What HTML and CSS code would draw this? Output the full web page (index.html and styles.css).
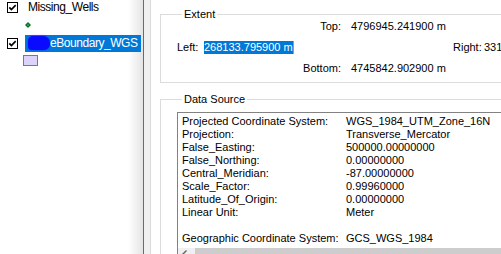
FILE: index.html
```html
<!DOCTYPE html>
<html lang="en">
<head>
    <meta charset="UTF-8">
    <title>Layer Properties</title>
    <link rel="stylesheet" href="styles.css">
</head>
<body>
<div class="window">
    <div class="toc">
        <div class="layer first">
            <svg class="check" width="11" height="11" viewBox="0 0 11 11"><rect x="0.5" y="0.5" width="10" height="10" fill="#fff" stroke="#000"/><path d="M2.3 5.4 L4.4 7.6 L8.7 3.2" fill="none" stroke="#000" stroke-width="1.7"/></svg>
            <span class="name">Missing_Wells</span>
        </div>
        <div class="symbol"><span class="point"></span></div>
        <div class="layer">
            <svg class="check" width="11" height="11" viewBox="0 0 11 11"><rect x="0.5" y="0.5" width="10" height="10" fill="#fff" stroke="#000"/><path d="M2.3 5.4 L4.4 7.6 L8.7 3.2" fill="none" stroke="#000" stroke-width="1.7"/></svg>
            <span class="name selected"><span class="redact"></span>eBoundary_WGS</span>
        </div>
        <div class="symbol poly-row"><span class="poly"></span></div>
    </div>
    <div class="splitter"></div>
    <div class="props">
        <fieldset class="group extent">
            <legend>Extent</legend>
            <div class="extent-grid">
                <span class="lbl c3">Top:</span>
                <span class="val c4">4796945.241900 m</span>

                <span class="c1">Left:</span>
                <span class="c2"><span class="sel">268133.795900 m</span></span>
                <span class="c5">Right:</span>
                <span class="c6">331048.560600 m</span>

                <span class="lbl c3">Bottom:</span>
                <span class="val c4">4745842.902900 m</span>
            </div>
        </fieldset>

        <fieldset class="group source">
            <legend>Data Source</legend>
            <div class="textbox">
                <div class="lines">
                    <span>Projected Coordinate System:</span><span>WGS_1984_UTM_Zone_16N</span>
                    <span>Projection:</span><span>Transverse_Mercator</span>
                    <span>False_Easting:</span><span>500000.00000000</span>
                    <span>False_Northing:</span><span>0.00000000</span>
                    <span>Central_Meridian:</span><span>-87.00000000</span>
                    <span>Scale_Factor:</span><span>0.99960000</span>
                    <span>Latitude_Of_Origin:</span><span>0.00000000</span>
                    <span>Linear Unit:</span><span>Meter</span>
                    <span>&nbsp;</span><span></span>
                    <span>Geographic Coordinate System:</span><span>GCS_WGS_1984</span>
                </div>
                <div class="hscroll">
                    <span class="arrow"><svg width="17" height="17" viewBox="0 0 17 17"><path d="M8.5 2.5 L5 6 L8.5 9.5" fill="none" stroke="#606060" stroke-width="1.4"/></svg></span>
                    <span class="thumb"></span>
                </div>
            </div>
        </fieldset>
    </div>
</div>
</body>
</html>
```
FILE: styles.css
```css
* {
    margin: 0;
    padding: 0;
    box-sizing: border-box;
}
body {
    width: 501px;
    height: 254px;
    overflow: hidden;
    background: #fff;
    font-family: "Liberation Sans", Arial, sans-serif;
    color: #000;
}
.window {
    display: flex;
    height: 254px;
}

/* table of contents */
.toc {
    width: 144px;
    flex: none;
    background: linear-gradient(to right, #fff 128px, #e4e4e4 143px);
    border-right: 1px solid #6a6a6a;
    font-size: 12px;
    letter-spacing: -0.45px;
}
.layer {
    display: flex;
    align-items: center;
    height: 18px;
    padding-left: 7px;
}
.layer.first {
    margin-top: -2px;
}
.check {
    flex: none;
    margin-top: 1px;
}
.name {
    height: 17px;
    line-height: 17px;
    margin-left: 7px;
    padding: 0 3px;
    white-space: nowrap;
}
.selected {
    background: #0078d7;
    color: #fff;
}
.redact {
    display: inline-block;
    width: 22px;
    height: 14px;
    vertical-align: -3px;
    background: #0a0aff;
    border-radius: 5px 7px 6px 4px;
    box-shadow: 0 0 2px #2020ff;
}
.symbol {
    display: flex;
    align-items: center;
    height: 18px;
    padding-left: 26px;
}
.point {
    width: 4px;
    height: 4px;
    background: #21a048;
    border: 1px solid #0c6a28;
    transform: rotate(45deg);
}
.poly-row {
    padding-left: 23px;
}
.poly {
    width: 15px;
    height: 11px;
    margin-top: -2px;
    background: #dcd3fa;
    border: 1px solid #7a7a7a;
}

.splitter {
    width: 7px;
    flex: none;
    background: #f0f0f0;
    border-right: 1px solid #dadada;
}

/* property page */
.props {
    flex: 1;
    min-width: 0;
    overflow: hidden;
    padding-left: 9px;
    padding-top: 8px;
    font-size: 11px;
}
.group {
    width: 420px;
    min-width: 0;
    border: 1px solid #dcdcdc;
}
.group legend {
    margin-left: 5px;
    padding: 0 2px;
    line-height: 13px;
}
.extent {
    padding: 0 0 7px 16px;
}
.extent-grid {
    display: grid;
    grid-template-columns: 27px 96px 41px 112px 30px max-content;
    grid-auto-rows: 13px;
    row-gap: 8px;
    line-height: 13px;
    white-space: nowrap;
    margin-top: -1px;
}
.c1 { grid-column: 1; }
.c2 { grid-column: 2; }
.c3 { grid-column: 3; text-align: right; }
.c4 { grid-column: 4; padding-left: 10px; }
.c5 { grid-column: 5; }
.c6 { grid-column: 6; padding-left: 1px; }
.sel {
    display: inline-block;
    height: 13px;
    background: #0078d7;
    color: #fff;
    border-right: 1px solid #f08c1e;
}

.source {
    margin-top: 10px;
    padding: 6px 0 0 16px;
    height: 200px;
}
.textbox {
    border-top: 1px solid #828282;
    border-left: 1px solid #828282;
    background: #fff;
}
.lines {
    display: grid;
    grid-template-columns: 164px max-content;
    grid-auto-rows: 13px;
    line-height: 13px;
    padding: 2px 0 3px 4px;
    white-space: nowrap;
}
.hscroll {
    display: flex;
    height: 17px;
    background: #f0f0f0;
}
.arrow {
    width: 17px;
    height: 17px;
    flex: none;
}
.thumb {
    flex: 1;
    background: #cdcdcd;
}
```
